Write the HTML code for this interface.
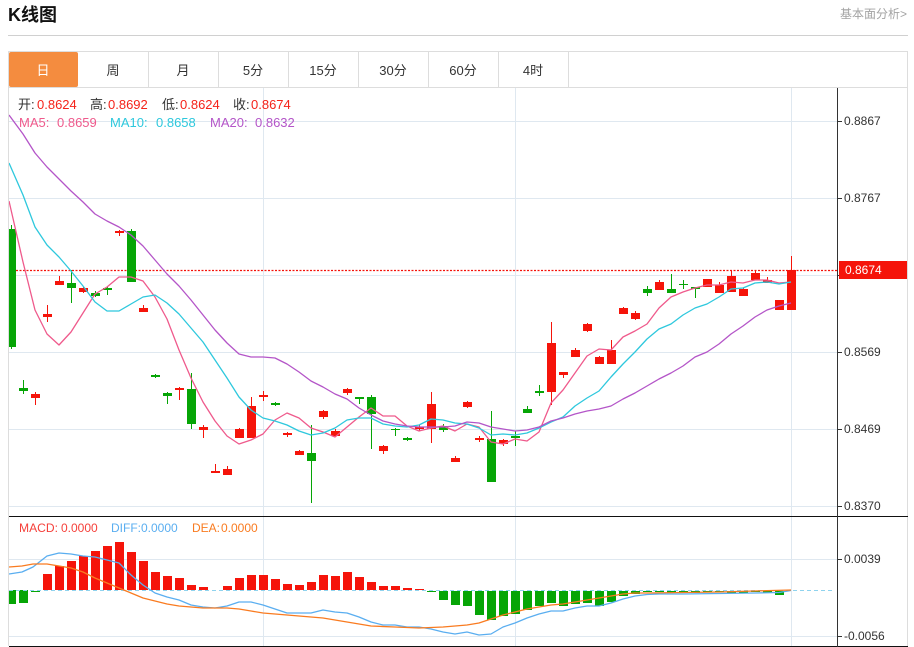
<!DOCTYPE html>
<html lang="zh">
<head>
<meta charset="utf-8">
<title>K线图</title>
<style>
html,body{margin:0;padding:0;background:#fff;width:914px;height:647px;overflow:hidden}
svg{position:absolute;left:0;top:0;display:block}
text{font-family:"Liberation Sans","Noto Sans CJK SC",sans-serif}
</style>
</head>
<body>
<svg width="914" height="647" viewBox="0 0 914 647" xmlns="http://www.w3.org/2000/svg">
<defs>
<clipPath id="c"><rect x="9" y="88" width="828" height="558"/></clipPath>
</defs>
<rect width="914" height="647" fill="#fff"/>
<!-- header -->
<text x="8" y="21" font-size="18" font-weight="700" fill="#111">K线图</text>
<text x="907" y="18" font-size="12" fill="#a3a3a3" text-anchor="end">基本面分析&gt;</text>
<rect x="8" y="35" width="900" height="1" fill="#d0d0d0"/>
<!-- tabs -->
<rect x="8.5" y="51.5" width="899" height="36" fill="#fff" stroke="#ddd"/>
<rect x="9" y="52" width="69" height="35" rx="2" fill="#f48c3f"/>
<path d="M148.5 52v35M218.5 52v35M288.5 52v35M358.5 52v35M428.5 52v35M498.5 52v35M568.5 52v35" stroke="#ddd" fill="none"/>
<g font-size="13" fill="#333" text-anchor="middle">
<text x="43" y="75" fill="#fff">日</text>
<text x="113" y="75">周</text>
<text x="183" y="75">月</text>
<text x="253" y="75">5分</text>
<text x="323" y="75">15分</text>
<text x="393" y="75">30分</text>
<text x="463" y="75">60分</text>
<text x="533" y="75">4时</text>
</g>
<!-- frame -->
<path d="M8.5 88V646M907.5 88V646" stroke="#ddd" fill="none"/>
<!-- grid -->
<path d="M9 121.5H837M9 198.5H837M9 275.5H837M9 352.5H837M9 429.5H837M9 506.5H837M9 559.5H837M9 636.5H837M263.5 88V646M515.5 88V646M791.5 88V646" stroke="#dfe8f0" fill="none"/>
<g clip-path="url(#c)">
<!-- dotted price line -->
<path d="M9 270.5H837" stroke="#f5120a" stroke-width="1.2" stroke-dasharray="2 1.5" fill="none"/>
<!-- candles -->
<path fill="#f5140a" d="M31 394h9v4h-9zM35 392h1v13h-1zM43 314h9v3h-9zM47 305h1v17h-1zM55 281h9v4h-9zM59 276h1v9h-1zM79 288h9v4h-9zM83 287h1v6h-1zM115 231h9v2h-9zM119 230h1v6h-1zM139 308h9v4h-9zM143 305h1v7h-1zM175 388h9v2h-9zM179 387h1v13h-1zM199 427h9v3h-9zM203 425h1v13h-1zM211 471h9v2h-9zM215 464h1v9h-1zM223 469h9v6h-9zM227 466h1v9h-1zM235 429h9v9h-9zM239 428h1v10h-1zM247 406h9v32h-9zM251 397h1v41h-1zM259 395h9v2h-9zM263 391h1v10h-1zM283 433h9v2h-9zM287 432h1v5h-1zM295 451h9v4h-9zM299 450h1v5h-1zM319 411h9v6h-9zM323 410h1v9h-1zM331 431h9v5h-9zM335 429h1v8h-1zM343 389h9v4h-9zM347 388h1v7h-1zM379 446h9v5h-9zM383 445h1v9h-1zM415 427h9v2h-9zM419 425h1v6h-1zM427 404h9v25h-9zM431 392h1v51h-1zM451 458h9v4h-9zM455 456h1v6h-1zM463 402h9v5h-9zM467 401h1v7h-1zM475 438h9v2h-9zM479 436h1v6h-1zM499 440h9v4h-9zM503 439h1v7h-1zM547 343h9v49h-9zM551 322h1v83h-1zM559 372h9v3h-9zM563 372h1v6h-1zM571 350h9v7h-9zM575 348h1v9h-1zM583 324h9v7h-9zM587 323h1v9h-1zM595 357h9v7h-9zM599 356h1v8h-1zM607 350h9v14h-9zM611 340h1v24h-1zM619 308h9v6h-9zM623 307h1v7h-1zM631 313h9v6h-9zM635 311h1v9h-1zM655 282h9v8h-9zM659 280h1v10h-1zM703 279h9v8h-9zM715 285h9v8h-9zM719 282h1v11h-1zM727 276h9v16h-9zM731 270h1v22h-1zM739 289h9v7h-9zM743 288h1v8h-1zM751 273h9v7h-9zM755 270h1v10h-1zM763 280h9v3h-9zM767 277h1v6h-1zM775 300h9v10h-9zM787 270h9v40h-9zM791 256h1v54h-1z"/>
<path fill="#06a506" d="M9 229h7v118H9zM11 225h1v124h-1zM19 388h9v3h-9zM23 380h1v14h-1zM67 283h9v5h-9zM71 270h1v33h-1zM91 293h9v3h-9zM95 291h1v6h-1zM103 288h9v2h-9zM107 287h1v8h-1zM127 231h9v51h-9zM131 229h1v53h-1zM151 375h9v2h-9zM155 374h1v4h-1zM163 393h9v3h-9zM167 392h1v12h-1zM187 389h9v35h-9zM191 373h1v56h-1zM271 403h9v2h-9zM275 402h1v4h-1zM307 453h9v8h-9zM311 425h1v78h-1zM355 397h9v2h-9zM359 397h1v7h-1zM367 397h9v17h-9zM371 395h1v54h-1zM391 429h9v1h-9zM395 428h1v8h-1zM403 438h9v2h-9zM407 437h1v4h-1zM439 426h9v4h-9zM443 424h1v8h-1zM487 439h9v43h-9zM491 411h1v71h-1zM511 436h9v2h-9zM515 431h1v15h-1zM523 409h9v4h-9zM527 406h1v7h-1zM535 391h9v2h-9zM539 385h1v11h-1zM643 289h9v4h-9zM647 286h1v10h-1zM667 289h9v4h-9zM671 274h1v19h-1zM679 284h9v1h-9zM683 280h1v9h-1zM691 287h9v2h-9zM695 287h1v11h-1z"/>
<!-- MA lines -->
<g fill="none" stroke-width="1.3" stroke-linejoin="round">
<polyline stroke="#ef5a8c" points="9,201 23,262 35,310 47,334 59,345 71,332 83,313 95,294 107,287 119,277 131,277 143,281 155,297 167,319 179,350 191,378 203,402 215,421 227,436 239,444 251,440 263,434 275,420 287,413 299,418 311,428 323,432 335,437 347,427 359,417 371,408 383,416 395,416 407,426 419,431 431,428 443,426 455,431 467,424 479,427 491,442 503,444 515,439 527,441 539,432 551,403 563,390 575,373 587,356 599,349 611,350 623,337 635,331 647,324 659,308 671,297 683,292 695,288 707,285 719,285 731,282 743,283 755,280 767,280 779,283 791,282"/>
<polyline stroke="#2ec8dd" points="9,163 23,195 35,227 47,245 59,257 71,271 83,286 95,302 107,311 119,311 131,304 143,297 155,295 167,303 179,314 191,328 203,342 215,360 227,378 239,397 251,410 263,418 275,421 287,425 299,431 311,435 323,433 335,428 347,420 359,418 371,418 383,424 395,426 407,427 419,425 431,419 443,420 455,423 467,424 479,428 491,435 503,434 515,435 527,433 539,428 551,422 563,417 575,406 587,398 599,391 611,377 623,364 635,352 647,339 659,329 671,324 683,315 695,308 707,304 719,297 731,289 743,288 755,283 767,282 779,284 791,282"/>
<polyline stroke="#b455c8" points="9,115 23,134 35,153 47,167 59,179 71,191 83,202 95,214 107,221 119,227 131,235 143,246 155,260 167,274 179,286 191,300 203,315 215,330 227,343 239,354 251,357 263,357 275,358 287,364 299,372 311,381 323,387 335,394 347,399 359,408 371,415 383,421 395,424 407,426 419,427 431,427 443,427 455,426 467,422 479,423 491,427 503,429 515,431 527,430 539,427 551,421 563,418 575,414 587,411 599,409 611,406 623,399 635,393 647,386 659,379 671,373 683,366 695,357 707,352 719,344 731,334 743,326 755,317 767,310 779,306 791,303"/>
</g>
<!-- MACD bars -->
<path fill="#f5140a" d="M43 574h9v16h-9zM55 566h9v24h-9zM67 561h9v29h-9zM79 556h9v34h-9zM91 551h9v39h-9zM103 546h9v44h-9zM115 542h9v48h-9zM127 552h9v38h-9zM139 561h9v29h-9zM151 572h9v18h-9zM163 576h9v14h-9zM175 578h9v12h-9zM187 585h9v5h-9zM199 587h9v3h-9zM223 586h9v4h-9zM235 578h9v12h-9zM247 575h9v15h-9zM259 575h9v15h-9zM271 579h9v11h-9zM283 584h9v6h-9zM295 585h9v5h-9zM307 582h9v8h-9zM319 575h9v15h-9zM331 576h9v14h-9zM343 572h9v18h-9zM355 577h9v13h-9zM367 582h9v8h-9zM379 586h9v4h-9zM391 586h9v4h-9zM403 588h9v2h-9zM415 589h9v1h-9z"/>
<path fill="#06a506" d="M9 590h7v14H9zM19 590h9v13h-9zM31 591h9v1h-9zM427 591h9v1h-9zM439 591h9v9h-9zM451 591h9v14h-9zM463 591h9v15h-9zM475 591h9v24h-9zM487 591h9v29h-9zM499 591h9v25h-9zM511 591h9v23h-9zM523 591h9v19h-9zM535 591h9v15h-9zM547 591h9v12h-9zM559 591h9v15h-9zM571 591h9v13h-9zM583 591h9v12h-9zM595 591h9v15h-9zM607 591h9v11h-9zM619 591h9v5h-9zM631 591h9v3h-9zM643 591h9v1h-9zM655 591h9v1h-9zM667 591h9v2h-9zM679 591h9v1h-9zM691 591h9v2h-9zM703 591h9v1h-9zM715 591h9v1h-9zM727 591h9v2h-9zM739 591h9v2h-9zM751 591h9v1h-9zM763 591h9v2h-9zM775 591h9v4h-9z"/>
<path d="M9 590.5H835" stroke="#8fd3ee" stroke-dasharray="4 3" fill="none"/>
<polyline fill="none" stroke="#5aaef0" stroke-width="1.3" stroke-linejoin="round" points="9,574 22,572 33,567 47,556 59,553 71,554 83,556 95,557 107,560 119,563 131,575 143,585 155,593 167,597 179,600 191,605 203,607 215,608 227,606 239,602 251,602 263,605 275,609 287,613 299,613 311,613 323,610 335,612 347,613 359,617 371,622 383,625 395,625 407,627 419,627 431,629 443,632 455,634 467,632 479,635 491,634 503,627 515,623 527,618 539,614 551,611 563,611 575,608 587,606 599,606 611,603 623,599 635,596 647,594.5 659,594 683,594 719,593.5 755,593 779,592.5 791,590.5"/>
<polyline fill="none" stroke="#f97b20" stroke-width="1.3" stroke-linejoin="round" points="9,567 22,566 33,564 47,564 59,566 71,568 83,572 95,578 107,583 119,588 131,593 143,598 155,601 167,604 179,606 191,607 203,608 215,608 227,608 239,609 251,611 263,613 275,614 287,615 299,616 323,618 347,622 371,626 395,627 419,628 443,627 455,626 467,625 479,623 491,619 503,615 515,612 527,609 539,607 551,605 563,604 575,602 587,600 599,598 611,596 623,594 635,593 647,593 719,592 791,590"/>
</g>
<!-- axis and separators -->
<rect x="9" y="516" width="899" height="1" fill="#111"/>
<rect x="9" y="646" width="899" height="1" fill="#111"/>
<rect x="837" y="88" width="1" height="559" fill="#333"/>
<path d="M838 121.5h4M838 198.5h4M838 275.5h4M838 352.5h4M838 429.5h4M838 506.5h4M838 559.5h4M838 636.5h4" stroke="#333" fill="none"/>
<g font-size="12" fill="#333">
<text x="844" y="125">0.8867</text>
<text x="844" y="202">0.8767</text>
<text x="844" y="356">0.8569</text>
<text x="844" y="433">0.8469</text>
<text x="844" y="510">0.8370</text>
<text x="844" y="563">0.0039</text>
<text x="844" y="640">-0.0056</text>
</g>
<!-- price tag -->
<rect x="839" y="261" width="68" height="18" fill="#f5140a"/>
<text x="845" y="274" font-size="12" fill="#fff">0.8674</text>
<!-- legends -->
<g font-size="13">
<text x="18" y="109" fill="#333">开:</text><text x="37" y="109" fill="#f5231a">0.8624</text>
<text x="90" y="109" fill="#333">高:</text><text x="108" y="109" fill="#f5231a">0.8692</text>
<text x="162" y="109" fill="#333">低:</text><text x="180" y="109" fill="#f5231a">0.8624</text>
<text x="233" y="109" fill="#333">收:</text><text x="251" y="109" fill="#f5231a">0.8674</text>
<text x="19" y="127" fill="#ef5a8c">MA5:</text><text x="57" y="127" fill="#ef5a8c">0.8659</text>
<text x="110" y="127" fill="#2ec8dd">MA10:</text><text x="156" y="127" fill="#2ec8dd">0.8658</text>
<text x="210" y="127" fill="#b455c8">MA20:</text><text x="255" y="127" fill="#b455c8">0.8632</text>
</g>
<g font-size="12">
<text x="19" y="532" fill="#f5403a" textLength="39" lengthAdjust="spacingAndGlyphs">MACD:</text><text x="61" y="532" fill="#f5403a">0.0000</text>
<text x="111" y="532" fill="#5aaef0">DIFF:</text><text x="141" y="532" fill="#5aaef0">0.0000</text>
<text x="192" y="532" fill="#f97b20">DEA:</text><text x="221" y="532" fill="#f97b20">0.0000</text>
</g>
</svg>
</body>
</html>
